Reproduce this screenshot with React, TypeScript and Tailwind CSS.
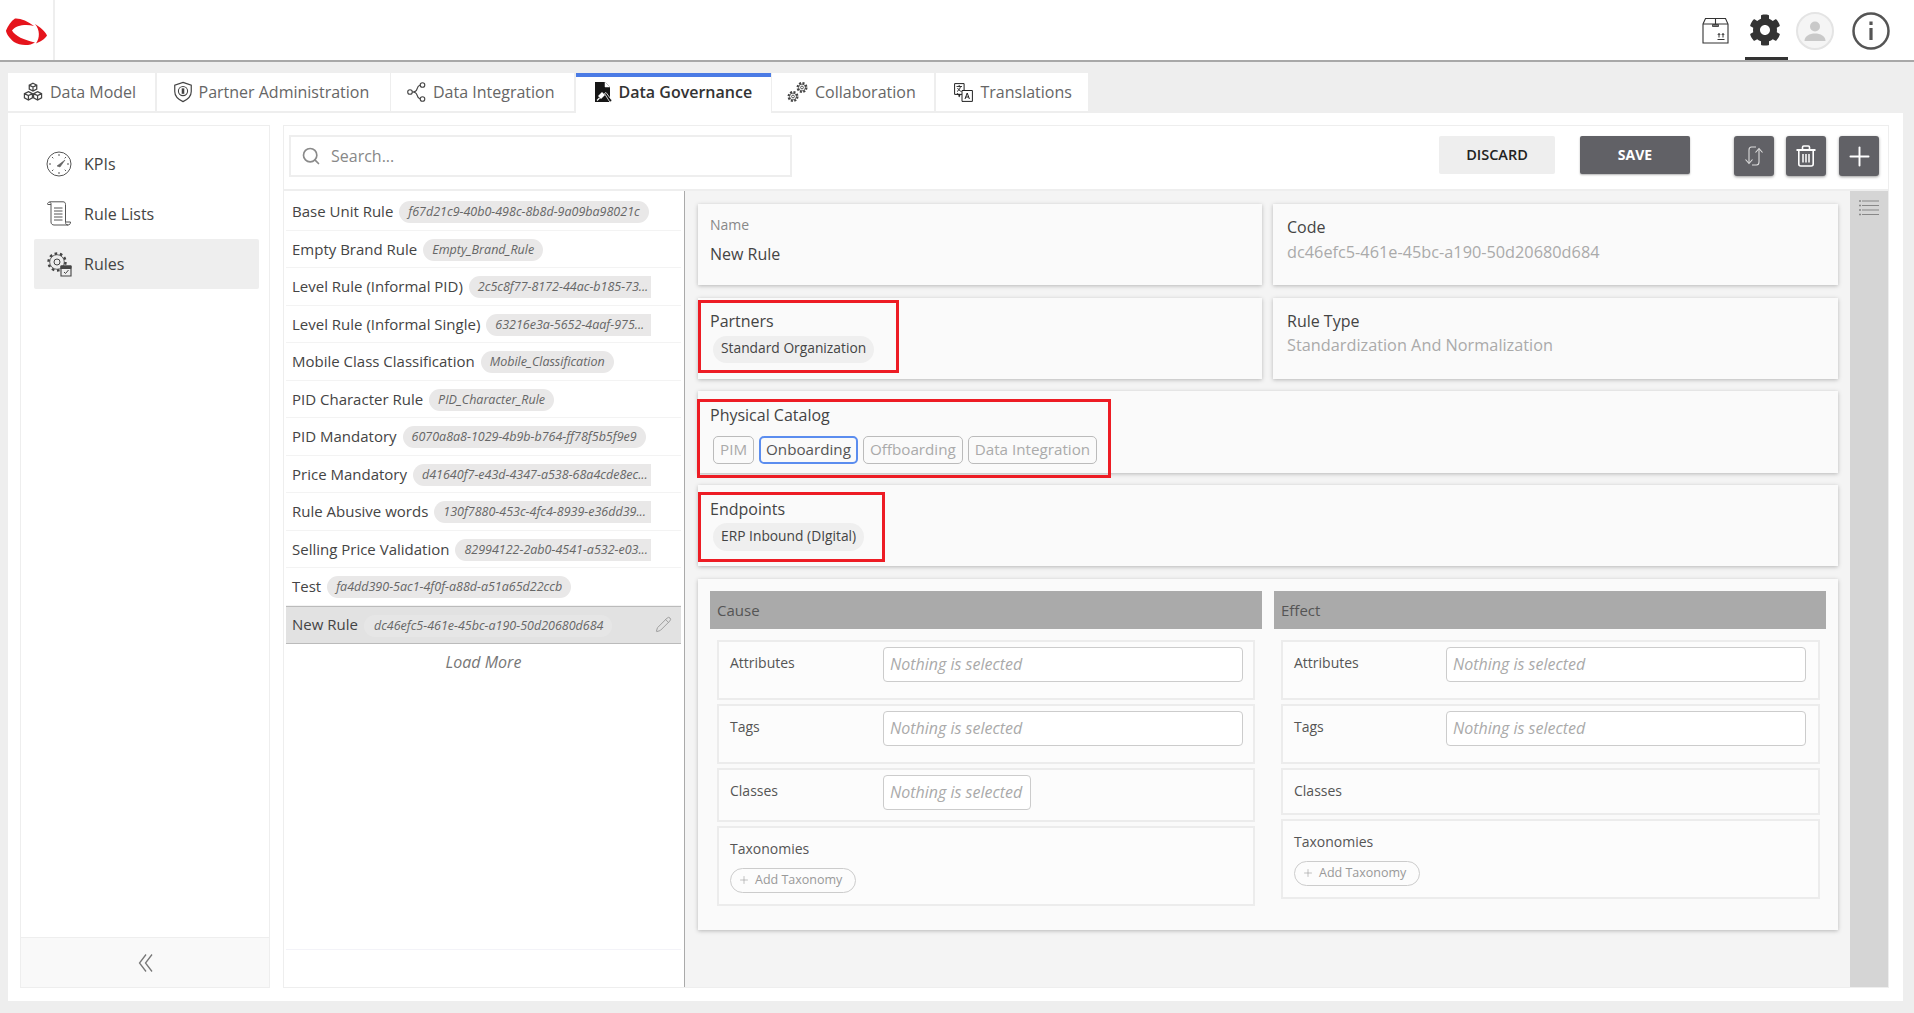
import React from "react";
import { FaCog } from "react-icons/fa";
import { Search, Plus, Pencil } from "lucide-react";

const Logo = () => (
  <svg width="48" height="32" viewBox="0 0 48 32" className="mt-[14px]">
    <path d="M15 4.500 C20 4 28 7 34 12 C26 10 16 11 12 16.500 C15 22 24 26 35 28.500 C30 32 20 32 14 28 C9 24 6 19 6 16.500 C8 12 11 7 15 4.500 Z" fill="#e5141c" />
    <path d="M35 10 C40 13 45 17 47 21.500 C45 25 40 28 36 29.500 C40 24 40 16 35 10 Z" fill="#e5141c" />
  </svg>
);

const I = ({ s = 20, children }: { s?: number; children: React.ReactNode }) => (
  <svg width={s} height={s} viewBox="0 0 24 24" fill="none" stroke="currentColor" strokeWidth="1.500">
    {children}
  </svg>
);

const Cubes = () => (
  <I s={20}>
    <path d="M12 1.500l4.500 2.300v4.700l-4.500 2.300-4.500-2.300V3.800zM7.500 3.800l4.500 2.300 4.500-2.300M12 6.100v4.700" />
    <path d="M6.500 11.500l4.800 2.400v5.200l-4.800 2.600-4.800-2.600v-5.200zM1.700 13.900l4.800 2.500 4.800-2.500M6.500 16.400v5.300" />
    <path d="M17.500 11.500l4.800 2.400v5.200l-4.800 2.600-4.800-2.600v-5.200zM12.700 13.900l4.800 2.500 4.800-2.500M17.500 16.400v5.300" />
  </I>
);
const Shield = () => (
  <I s={22}>
    <path d="M12 1.500l9 3v7c0 5-3.500 8.500-9 11-5.500-2.500-9-6-9-11v-7z" strokeWidth="1.300" />
    <circle cx="12" cy="11" r="5" strokeWidth="1.200" />
    <path d="M10.600 8h2.800v6h-2.800z" fill="currentColor" stroke="none" />
  </I>
);
const Nodes = () => (
  <svg width="20" height="20" viewBox="0 0 20 20" fill="none" stroke="#444" strokeWidth="1.100">
    <circle cx="3" cy="10" r="2.300" />
    <circle cx="15.500" cy="3" r="2.300" />
    <circle cx="15.500" cy="17" r="2.300" />
    <path d="M5.300 10c3 0 4.200-1 4.700-3 .5-2 1.500-3.500 3.200-4M5.300 10c3 0 4.200 1 4.700 3 .5 2 1.500 3.500 3.200 4" />
  </svg>
);
const GovDoc = () => (
  <svg width="19" height="21" viewBox="0 0 19 21" className="shrink-0">
    <path d="M1 0h10l5 5v15H1z" fill="#161616" />
    <path d="M11 0v5h5" fill="#fff" stroke="#fff" strokeWidth="0.500" />
    <path d="M10.500 11.500l1.500-1 6 8-2 1.800z" fill="#161616" stroke="#fff" strokeWidth="0.800" />
    <path d="M4 14l4-4 3 3-4 4z" fill="#fff" />
    <path d="M5.500 16l-2.500 2.500" stroke="#fff" strokeWidth="1.200" />
  </svg>
);
const TwoGears = () => (
  <svg width="22" height="22" viewBox="0 0 22 22" fill="none" stroke="#444" className="shrink-0">
    <circle cx="15" cy="6.500" r="4.400" strokeWidth="2.200" strokeDasharray="2 1.450" />
    <circle cx="15" cy="6.500" r="3.400" strokeWidth="0.800" />
    <circle cx="15" cy="6.500" r="1.400" strokeWidth="0.900" />
    <circle cx="6" cy="15.500" r="4.400" strokeWidth="2.200" strokeDasharray="2 1.450" />
    <circle cx="6" cy="15.500" r="3.400" strokeWidth="0.800" />
    <circle cx="6" cy="15.500" r="1.400" strokeWidth="0.900" />
  </svg>
);
const Translate = () => (
  <svg width="19" height="19" viewBox="0 0 19 19" fill="none" stroke="#222" className="shrink-0">
    <path d="M.6.600h9.500v10.800H.6z" strokeWidth="1" />
    <path d="M8 7.500h10.400v10.900H8z" fill="#fff" strokeWidth="1" />
    <path d="M2.500 3.500h5.500M5.200 2v1.500M3 8.500c2-1 3-3 3.500-5M3.500 5c1 1.500 2 3 4 3.500" strokeWidth="0.900" />
    <path d="M11 16l2.200-6 2.200 6M11.800 14h2.800" strokeWidth="1" />
    <path d="M3 10.500l3 2.500M6 11l-1 3" strokeWidth="1.200" />
  </svg>
);

const Gauge = () => (
  <svg width="26" height="26" viewBox="0 0 26 26" fill="none" stroke="#555" className="shrink-0">
    <circle cx="13" cy="13" r="12" strokeWidth="1" />
    <path d="M13 3v2M23 13h-2M3 13h2M13 21v2M6 6l1.300 1.300M20 6l-1.300 1.300M6 20l1.300-1.300M20 20l-1.300-1.300" strokeWidth="1" />
    <path d="M11 15l8-6-5 7z" fill="#666" strokeWidth="0.500" />
  </svg>
);
const Scroll = () => (
  <svg width="26" height="25" viewBox="0 0 25 25" fill="none" stroke="#555" className="shrink-0">
    <path d="M1 3c0-2 3-2.500 3.500-.5V21c0 2 1.500 3 3 3h14c-1.500 0-2.500-1-2.500-2.500V3.500C19 1.500 18 .8 16.500 .8H3" strokeWidth="1" />
    <path d="M1 3.500h3.500M19 21h5c0 2-1 3-2.500 3" strokeWidth="1" />
    <path d="M7.500 7h8.500M7.500 10h8.500M7.500 13h8.500M7.500 16h8.500M7.500 19h8.500" strokeWidth="1" />
  </svg>
);
const RuleGear = () => (
  <svg width="26" height="26" viewBox="0 0 26 26" fill="none" stroke="#444" className="shrink-0">
    <circle cx="11" cy="11" r="8.500" strokeWidth="2.400" strokeDasharray="2.600 2.740" />
    <circle cx="11" cy="11" r="7.300" strokeWidth="0.800" />
    <circle cx="11" cy="11" r="3" strokeWidth="1" />
    <path d="M15 15h10v10H15z" fill="#eee" strokeWidth="1.100" />
    <path d="M15 15h10v2.500H15z" fill="#444" />
    <path d="M18 21l1.500 1.500 3-3.500" strokeWidth="1" />
  </svg>
);

const BoxIcon = () => (
  <svg width="27" height="27" viewBox="0 0 27 27" fill="none" stroke="#333" strokeWidth="1.100">
    <path d="M1 7l2.500-5.500h20L26 7v19H1z" />
    <path d="M1 7h25M13.500 1.500V7" />
    <path d="M10.500 7.500h6v2h-6z" fill="#777" stroke="#333" strokeWidth="0.800" />
    <path d="M15.500 22.500h7M17 20.500v-4M21 20.500v-4M15.800 18l1.200-1.500 1.200 1.500M19.800 18l1.200-1.500 1.200 1.500" strokeWidth="1" />
  </svg>
);
const Avatar = () => (
  <div className="w-[38px] h-[38px] rounded-full border-2 border-[#e4e4e4] bg-[#f5f5f5] flex items-center justify-center">
    <svg width="24" height="24" viewBox="0 0 24 24" fill="#c9c9c9">
      <circle cx="12" cy="7.500" r="5" />
      <path d="M1.500 22c0-5 5-7.500 10.500-7.500S22.500 17 22.500 22z" />
    </svg>
  </div>
);
const Info = () => (
  <svg width="38" height="38" viewBox="0 0 38 38" fill="none" stroke="#555">
    <circle cx="19" cy="19" r="17.500" strokeWidth="2.500" />
    <path d="M19 16v12" strokeWidth="3.200" />
    <path d="M19 9.500v3.500" strokeWidth="3.200" />
  </svg>
);
const Sync = () => (
  <svg width="20" height="22" viewBox="0 0 20 22" fill="none" stroke="#ddd" strokeWidth="1.100">
    <path d="M12 2H7.500C5.500 2 5 3.500 5 5v13" />
    <path d="M1.500 14.500L5 18.500l3.500-4" />
    <path d="M8 20h4.500c2 0 2.500-1.500 2.500-3V4" />
    <path d="M11.500 7.500L15 3.500l3.500 4" />
  </svg>
);
const Trash = () => (
  <svg width="20" height="22" viewBox="0 0 20 22" fill="none" stroke="#fff">
    <path d="M.5 5h19" strokeWidth="2" />
    <path d="M6.500 4.500V2.200c0-.7.500-1.200 1.200-1.200h4.600c.7 0 1.200 .5 1.200 1.200v2.300" strokeWidth="1.600" />
    <path d="M2.800 5.500V19c0 1.200 .8 2 2 2h10.400c1.200 0 2-.8 2-2V5.500" strokeWidth="1.600" />
    <path d="M7 9v8.500M10 9v8.500M13 9v8.500" strokeWidth="1.500" />
  </svg>
);
const ListIco = () => (
  <svg width="20" height="17" viewBox="0 0 20 17" stroke="#888" strokeWidth="1.100">
    <path d="M3 1h17M3 5.500h17M3 10h17M3 14.500h17" />
    <path d="M0 1h2M0 5.500h2M0 10h2M0 14.500h2" strokeWidth="1.600" />
  </svg>
);
const Chevrons = () => (
  <svg width="15" height="18" viewBox="0 0 15 18" fill="none" stroke="#777" strokeWidth="1.300">
    <path d="M8 .5L1.500 9 8 17.500M14 .5L7.500 9 14 17.500" />
  </svg>
);

const tabs = [
  { t: "Data Model", w: "w-[147px]", pl: "pl-[15px]", gap: "gap-[7px]", i: <Cubes /> },
  { t: "Partner Administration", w: "w-[233px]", pl: "pl-[15px]", gap: "gap-[5px]", i: <Shield /> },
  { t: "Data Integration", w: "w-[183px]", pl: "pl-[16px]", gap: "gap-[6px]", i: <Nodes /> },
  { t: "Data Governance", w: "w-[195px]", pl: "pl-[18px]", gap: "gap-[6px]", i: <GovDoc />, active: true },
  { t: "Collaboration", w: "w-[162px]", pl: "pl-[15px]", gap: "gap-[6px]", i: <TwoGears /> },
  { t: "Translations", w: "w-[152px]", pl: "pl-[18px]", gap: "gap-[8px]", i: <Translate /> },
];

const rules = [
  { n: "Base Unit Rule", c: "f67d21c9-40b0-498c-8b8d-9a09ba98021c" },
  { n: "Empty Brand Rule", c: "Empty_Brand_Rule" },
  { n: "Level Rule (Informal PID)", c: "2c5c8f77-8172-44ac-b185-73...", cut: true },
  { n: "Level Rule (Informal Single)", c: "63216e3a-5652-4aaf-975...", cut: true },
  { n: "Mobile Class Classification", c: "Mobile_Classification" },
  { n: "PID Character Rule", c: "PID_Character_Rule" },
  { n: "PID Mandatory", c: "6070a8a8-1029-4b9b-b764-ff78f5b5f9e9" },
  { n: "Price Mandatory", c: "d41640f7-e43d-4347-a538-68a4cde8ec...", cut: true },
  { n: "Rule Abusive words", c: "130f7880-453c-4fc4-8939-e36dd39...", cut: true },
  { n: "Selling Price Validation", c: "82994122-2ab0-4541-a532-e03...", cut: true },
  { n: "Test", c: "fa4dd390-5ac1-4f0f-a88d-a51a65d22ccb" },
];

const RuleRow = ({ n, c, cut }: { n: string; c: string; cut?: boolean }) => (
  <div className="h-[37.5px] shrink-0 border-b border-[#f3f3f3] pl-[6px] flex items-center">
    <div className="flex items-center w-[359px]">
      <span className="shrink-0 text-[15px] text-[#444]">{n}</span>
      <span
        className={`ml-[6px] whitespace-nowrap h-[22px] leading-[22px] mt-[2px] pl-[9px] bg-[#e9e8e8] italic text-[12.500px] text-[#666] ${
          cut ? "rounded-l-full flex-1 min-w-0 pr-0" : "rounded-full pr-[9px]"
        }`}
      >
        {c}
      </span>
    </div>
  </div>
);

const Field = ({ c = "", children }: { c?: string; children: React.ReactNode }) => (
  <div className={`border-2 border-[#ececec] bg-[#fcfcfc] pl-[11px] ${c}`}>{children}</div>
);

const Select = ({ c = "" }: { c?: string }) => (
  <div className={`h-[35px] pb-[1px] border border-[#ccc] rounded-[4px] bg-white pl-[6px] flex items-center italic text-[16px] text-[#aaa] whitespace-nowrap ${c}`}>
    Nothing is selected
  </div>
);

const SelectRow = ({ label, w, c, sel }: { label: string; w: string; c: string; sel: string }) => (
  <Field c={`pt-[5px] flex ${c}`}>
    <span className={`${w} shrink-0 mt-[6px] text-[14px] leading-[20px] text-[#555]`}>{label}</span>
    <Select c={sel} />
  </Field>
);

const Tax = ({ c = "" }: { c?: string }) => (
  <Field c={`h-[80px] pt-[11px] ${c}`}>
    <div className="text-[14px] leading-[20px] text-[#555]">Taxonomies</div>
    <div className="mt-[9px] w-[126px] h-[25px] pb-[1px] rounded-full border border-[#ccc] flex items-center pl-[7px] gap-[5px] text-[12.500px] text-[#999]">
      <Plus size={12} strokeWidth={1.2} />
      <span>Add Taxonomy</span>
    </div>
  </Field>
);

const Card = ({ c = "", children }: { c?: string; children: React.ReactNode }) => (
  <div className={`relative bg-[#fafafa] shadow-[0_1px_4px_rgba(0,0,0,0.25)] ${c}`}>{children}</div>
);

const Mark = ({ c }: { c: string }) => <div className={`absolute border-[3px] border-[#ed1c24] ${c}`} />;

const Tag = ({ t, on }: { t: string; on?: boolean }) => (
  <span
    className={`h-[28px] pb-[2px] flex items-center rounded-[5px] text-[15.200px] ${
      on ? "border-2 border-[#5b8def] text-[#555] px-[5px]" : "border border-[#bbb] text-[#aaa] px-[6px]"
    }`}
  >
    {t}
  </span>
);

export default function App() {
  return (
    <div className="w-[1914px] h-[1013px] overflow-hidden bg-[#eeeeee] flex flex-col font-['Open_Sans',sans-serif]">
      <header className="h-[62px] shrink-0 bg-white border-b-2 border-[#a8a8a8] flex">
        <div className="w-[55px] border-r-2 border-[#eee]">
          <Logo />
        </div>
        <div className="ml-auto flex mr-[24px] items-start">
          <div className="mt-[17px] mr-[16px]"><BoxIcon /></div>
          <div className="w-[43px] h-[60px] border-b-[3px] border-[#333] pt-[14px] pl-[4px] mr-[8px] text-[#333]"><FaCog size={32} /></div>
          <div className="mt-[12px] mr-[18px]"><Avatar /></div>
          <div className="mt-[12px]"><Info /></div>
        </div>
      </header>

      <nav className="mt-[11px] ml-[8px] flex gap-[1.500px] h-[38px] items-start shrink-0">
        {tabs.map((t) => (
          <div
            key={t.t}
            className={`${t.w} ${t.pl} ${t.gap} bg-white flex items-center text-[16px] ${
              t.active ? "h-[40px] border-t-[4px] pb-[6px] border-[#4b7be5] font-semibold text-[#333]" : "h-[38px] text-[#666]"
            }`}
          >
            <span className="text-[#444] shrink-0 flex">{t.i}</span>
            <span>{t.t}</span>
          </div>
        ))}
      </nav>

      <main className="mt-[2px] ml-[8px] w-[1895px] h-[888px] bg-white pt-[12px] pl-[12px] flex gap-[13px]">
        <aside className="w-[250px] h-[863px] border border-[#eee] flex flex-col">
          <div className="flex-1 pt-[13px] pl-[13px]">
            {[
              { t: "KPIs", i: <Gauge /> },
              { t: "Rule Lists", i: <Scroll /> },
              { t: "Rules", i: <RuleGear />, a: true },
            ].map((x) => (
              <div
                key={x.t}
                className={`w-[225px] h-[50px] pl-[12px] pb-[1px] flex items-center gap-[12px] rounded-[2px] text-[16px] text-[#444] ${x.a ? "bg-[#eeeeee]" : ""}`}
              >
                {x.i}
                <span>{x.t}</span>
              </div>
            ))}
          </div>
          <div className="h-[50px] bg-[#f9f9f9] border-t border-[#eee] flex items-center justify-center">
            <Chevrons />
          </div>
        </aside>

        <section className="w-[1606px] h-[863px] border border-[#eee] flex flex-col">
          <div className="h-[65px] shrink-0 border-b-2 border-[#eee] flex items-start pt-[9px] pl-[5px] pr-[9px]">
            <div className="w-[503px] h-[42px] border-2 border-[#eee] flex items-center pl-[10px] gap-[10px] text-[16px] text-[#888]">
              <Search size={20} strokeWidth={2} className="text-[#8a8a8a]" />
              <span>Search...</span>
            </div>
            <div className="ml-auto flex items-start">
              <div className="w-[116px] h-[38px] mt-[1px] bg-[#eee] rounded-[2px] flex items-center justify-center text-[14.500px] font-semibold text-[#222]">DISCARD</div>
              <div className="w-[110px] h-[38px] mt-[1px] pb-[2px] ml-[25px] bg-[#616166] rounded-[2px] shadow-[0_1px_2px_rgba(0,0,0,0.3)] flex items-center justify-center text-[14px] font-bold text-white">SAVE</div>
              <div className="w-[40px] h-[40px] mt-[1px] ml-[44px] bg-[#616166] rounded-[3px] shadow-[0_1px_3px_rgba(0,0,0,0.4)] flex items-center justify-center"><Sync /></div>
              <div className="w-[40px] h-[40px] mt-[1px] ml-[12px] bg-[#616166] rounded-[3px] shadow-[0_1px_3px_rgba(0,0,0,0.4)] flex items-center justify-center"><Trash /></div>
              <div className="w-[40px] h-[40px] mt-[1px] ml-[13px] bg-[#616166] rounded-[3px] shadow-[0_1px_3px_rgba(0,0,0,0.4)] flex items-center justify-center text-white"><Plus size={31} strokeWidth={1.5} /></div>
            </div>
          </div>

          <div className="flex-1 flex min-h-0">
            <div className="w-[401px] shrink-0 border-r border-[#aaa] flex flex-col pl-[2px] pr-[3px] pt-[2px]">
              {rules.map((r) => (
                <RuleRow key={r.n} {...r} />
              ))}
              <div className="h-[38px] shrink-0 bg-[#e2e2e2] border-y border-[#bbb] pl-[6px] flex items-center relative">
                <span className="text-[15px] text-[#444]">New Rule</span>
                <span className="ml-[6px] pl-[10px] pr-[9px] h-[22px] leading-[22px] mt-[2px] rounded-full bg-[#e6e6e6] italic text-[12.500px] text-[#666]">dc46efc5-461e-45bc-a190-50d20680d684</span>
                <Pencil size={17} strokeWidth={1.3} className="absolute right-[9px] top-[9px] text-[#999]" />
              </div>
              <div className="h-[36px] shrink-0 flex items-center justify-center italic text-[16px] text-[#777]">Load More</div>
              <div className="flex-1" />
              <div className="h-[38px] border-t border-[#f3f3f8]" />
            </div>

            <div className="flex-1 bg-[#f4f4f4] flex min-w-0">
              <div className="flex-1 pt-[13px] pl-[13px] pr-[12px] text-[#444]">
                <div className="flex gap-[11px]">
                  <Card c="w-[564px] h-[81px] pl-[12px] pt-[11px]">
                    <div className="text-[14px] leading-[20px] text-[#888]">Name</div>
                    <div className="mt-[8px] text-[16px] leading-[22px]">New Rule</div>
                  </Card>
                  <Card c="flex-1 h-[81px] pl-[14px] pt-[12px]">
                    <div className="text-[16px] leading-[22px]">Code</div>
                    <div className="mt-[3px] text-[16.300px] leading-[22px] text-[#aaa]">dc46efc5-461e-45bc-a190-50d20680d684</div>
                  </Card>
                </div>
                <div className="flex gap-[11px] mt-[13px]">
                  <Card c="w-[564px] h-[81px] pl-[12px] pt-[12px]">
                    <div className="text-[16px] leading-[22px]">Partners</div>
                    <div className="mt-[4px] ml-[3px] w-fit h-[27px] pb-[2px] px-[8px] rounded-full bg-[#efefef] flex items-center text-[13.800px]">Standard Organization</div>
                    <Mark c="left-0 top-[2px] w-[201px] h-[73px]" />
                  </Card>
                  <Card c="flex-1 h-[81px] pl-[14px] pt-[12px]">
                    <div className="text-[16px] leading-[22px]">Rule Type</div>
                    <div className="mt-[2px] text-[16.300px] leading-[22px] text-[#aaa]">Standardization And Normalization</div>
                  </Card>
                </div>
                <Card c="mt-[12px] h-[82px] pl-[12px] pt-[13px]">
                  <div className="text-[16px] leading-[22px]">Physical Catalog</div>
                  <div className="mt-[10px] ml-[3px] flex gap-[5px]">
                    <Tag t="PIM" />
                    <Tag t="Onboarding" on />
                    <Tag t="Offboarding" />
                    <Tag t="Data Integration" />
                  </div>
                  <Mark c="left-[-1px] top-[8px] w-[414px] h-[79px]" />
                </Card>
                <Card c="mt-[12px] h-[81px] pl-[12px] pt-[13px]">
                  <div className="text-[16px] leading-[22px]">Endpoints</div>
                  <div className="mt-[3px] ml-[3px] w-fit h-[28px] pb-[2px] px-[8px] rounded-full bg-[#efefef] flex items-center text-[13.800px]">ERP Inbound (DIgital)</div>
                  <Mark c="left-0 top-[7px] w-[187px] h-[70px]" />
                </Card>
                <Card c="mt-[13px] h-[351px] pt-[12px] pl-[12px] flex gap-[12px]">
                  <div className="w-[552px]">
                    <div className="h-[38px] bg-[#aaaaaa] pl-[7px] flex items-center text-[15px] text-[#555]">Cause</div>
                    <div className="mt-[11px] mx-[7px] flex flex-col gap-[4px]">
                      <SelectRow label="Attributes" w="w-[153px]" c="h-[60px]" sel="w-[360px]" />
                      <SelectRow label="Tags" w="w-[153px]" c="h-[60px]" sel="w-[360px]" />
                      <SelectRow label="Classes" w="w-[153px]" c="h-[54px]" sel="w-[148px]" />
                      <Tax />
                    </div>
                  </div>
                  <div className="w-[552px]">
                    <div className="h-[38px] bg-[#aaaaaa] pl-[7px] flex items-center text-[15px] text-[#555]">Effect</div>
                    <div className="mt-[11px] ml-[7px] mr-[6px] flex flex-col gap-[4px]">
                      <SelectRow label="Attributes" w="w-[152px]" c="h-[60px]" sel="w-[360px]" />
                      <SelectRow label="Tags" w="w-[152px]" c="h-[60px]" sel="w-[360px]" />
                      <Field c="h-[47px] pt-[11px] text-[14px] leading-[20px] text-[#555]">Classes</Field>
                      <Tax />
                    </div>
                  </div>
                </Card>
              </div>
              <div className="w-[38px] shrink-0 bg-[#d5d5d5] pt-[9px] pl-[9px]">
                <ListIco />
              </div>
            </div>
          </div>
        </section>
      </main>
    </div>
  );
}
